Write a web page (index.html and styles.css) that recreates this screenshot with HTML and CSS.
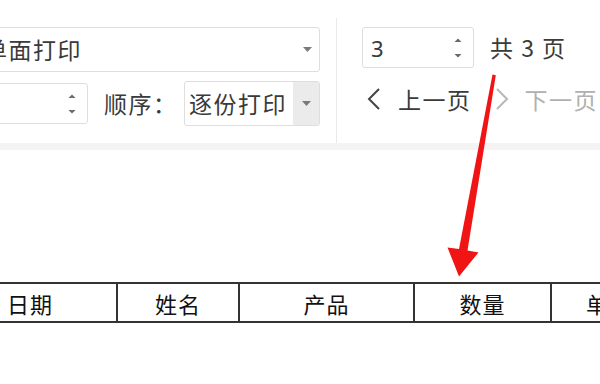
FILE: index.html
```html
<!DOCTYPE html>
<html lang="zh-CN">
<head>
<meta charset="utf-8">
<title>打印设置</title>
<link rel="stylesheet" href="styles.css">
</head>
<body>
<div class="toolbar">
  <div class="panel left">
    <div class="row">
      <div class="select wide">
        <span class="val">单面打印</span>
        <svg class="caret" width="9" height="5" viewBox="0 0 9 5"><path d="M0 0H9L4.5 5Z"/></svg>
      </div>
    </div>
    <div class="row">
      <div class="spin copies">
        <span class="val"></span>
        <svg class="spinner" width="10" height="22" viewBox="0 0 10 22"><path d="M1.5 5L5 1.5L8.5 5Z M1.5 17L8.5 17L5 20.5Z"/></svg>
      </div>
      <span class="label">顺序：</span>
      <div class="select order">
        <span class="val">逐份打印</span>
        <span class="btn"><svg class="caret" width="9" height="5" viewBox="0 0 9 5"><path d="M0 0H9L4.5 5Z"/></svg></span>
      </div>
    </div>
  </div>
  <div class="divider"></div>
  <div class="panel right">
    <div class="row r1">
      <div class="spin page">
        <span class="val">3</span>
        <svg class="spinner" width="10" height="22" viewBox="0 0 10 22"><path d="M1.5 5L5 1.5L8.5 5Z M1.5 17L8.5 17L5 20.5Z"/></svg>
      </div>
      <span class="label total">共 3 页</span>
    </div>
    <div class="row r2">
      <span class="nav">
        <svg class="chev" width="14" height="24" viewBox="0 0 14 24"><path d="M12 2L2 12L12 22" fill="none" stroke-width="2"/></svg>
        <span>上一页</span>
      </span>
      <span class="nav disabled">
        <svg class="chev" width="14" height="24" viewBox="0 0 14 24"><path d="M2 2L12 12L2 22" fill="none" stroke-width="2"/></svg>
        <span>下一页</span>
      </span>
    </div>
  </div>
</div>

<div class="sheet">
  <table class="grid">
    <tr>
      <td class="c1">日期</td>
      <td class="c2">姓名</td>
      <td class="c3">产品</td>
      <td class="c4">数量</td>
      <td class="c5">单价</td>
    </tr>
  </table>
</div>

<svg class="arrow" width="600" height="384" viewBox="0 0 600 384">
  <polygon points="492.5,74.5 495.8,75.3 467.5,250.5 478.5,252.4 459,276.5 447.5,247.4 459,249"/>
</svg>
</body>
</html>
```

FILE: styles.css
```css
html, body {
  margin: 0;
  padding: 0;
}
body {
  width: 600px;
  height: 384px;
  overflow: hidden;
  background: #fff;
  font-family: "Noto Sans CJK SC", "Microsoft YaHei", sans-serif;
  color: #3a3a3a;
  position: relative;
}

.toolbar {
  display: flex;
  padding-top: 18px;
  height: 125px;
  border-bottom: 7px solid #f4f4f4;
}

.panel {
  display: flex;
  flex-direction: column;
  padding-top: 9px;
}
.left {
  margin-left: -28px;
  width: 348px;
  flex: none;
  gap: 9px;
}
.row {
  display: flex;
  align-items: center;
  white-space: nowrap;
}
.left .row {
  height: 45px;
}

.val {
  font-size: 23px;
  letter-spacing: 1.5px;
  line-height: 1;
}

.select {
  box-sizing: border-box;
  height: 45px;
  border: 1px solid #dedede;
  border-radius: 3px;
  display: flex;
  align-items: center;
  background: #fff;
  flex: none;
}
.select.wide {
  width: 348px;
  padding: 0 7px 0 11px;
  justify-content: space-between;
}
.caret {
  fill: #7a7a7a;
}

.spin {
  box-sizing: border-box;
  height: 41px;
  border: 1px solid #dedede;
  border-radius: 3px;
  display: flex;
  align-items: center;
  justify-content: space-between;
  flex: none;
}
.spinner {
  fill: #6a6a6a;
}
.spin.copies {
  width: 116px;
  padding: 0 10px 0 8px;
}
.label {
  font-size: 23px;
  letter-spacing: 1.5px;
  line-height: 1;
  margin-left: 16px;
  flex: none;
}
.select.order {
  margin-left: auto;
  width: 136px;
  padding-left: 4px;
  overflow: hidden;
}
.select.order .val {
  flex: 1;
}
.btn {
  width: 26px;
  align-self: stretch;
  background: #ebebeb;
  display: flex;
  align-items: center;
  justify-content: center;
}

.divider {
  width: 1px;
  background: #e9e9e9;
  margin-left: 16px;
  flex: none;
}

.right {
  margin-left: 25px;
}
.row.r1 {
  height: 41px;
}
.spin.page {
  width: 112px;
  padding: 0 10px 0 8px;
}
.spin.page .val {
  font-family: "Noto Sans", "Noto Sans CJK SC", sans-serif;
  font-size: 22px;
}
.total {
  margin-left: 16px;
  letter-spacing: 0;
  word-spacing: 3px;
}
.row.r2 {
  margin-top: 16px;
  height: 30px;
}
.nav {
  display: flex;
  align-items: center;
  font-size: 23px;
  letter-spacing: 1.5px;
  line-height: 1;
  color: #3a3a3a;
}
.nav .chev {
  stroke: #444;
  margin: 0 17px 0 5px;
}
.nav.disabled {
  color: #b0b0b0;
  margin-left: 23px;
}
.nav.disabled .chev {
  stroke: #b8b8b8;
  margin: 0 16px 0 0;
}

.sheet {
  margin-top: 132px;
  margin-left: -58px;
}
.grid {
  border-collapse: collapse;
  table-layout: fixed;
  width: 714px;
}
.grid td {
  border: 2px solid #333;
  height: 37px;
  padding: 0;
  text-align: center;
  font-size: 22px;
  line-height: 1;
  color: #111;
  letter-spacing: 1px;
}
.c1 { width: 172px; }
.c2 { width: 120px; }
.c3 { width: 173px; }
.c4 { width: 135px; }
.c5 { width: 114px; }

.arrow {
  position: absolute;
  left: 0;
  top: 0;
  fill: #f01414;
  pointer-events: none;
}
```
